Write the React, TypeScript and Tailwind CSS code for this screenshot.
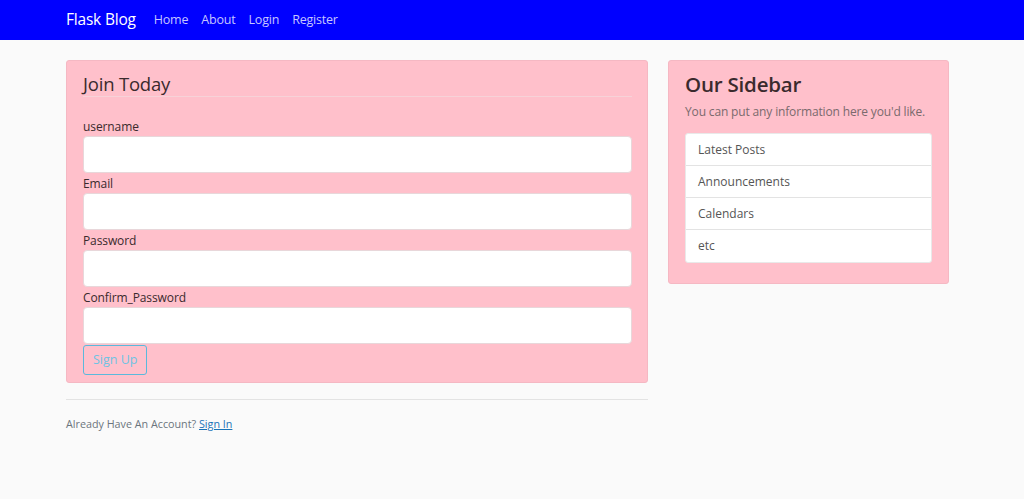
export default function App() {
  const fields = ["username", "Email", "Password", "Confirm_Password"];
  const items = ["Latest Posts", "Announcements", "Calendars", "etc"];
  return (
    <div className="min-h-[499px] bg-[#fafafa] font-['Open_Sans',sans-serif] text-[#212529]">
      <nav className="h-10 bg-[#0000ff] flex items-center pl-[66px]">
        <span className="text-white text-[15.5px] mr-[18px] leading-none tracking-[-0.2px]">Flask Blog</span>
        <div className="flex gap-[13px] text-[12.5px] tracking-[-0.2px] text-[rgba(255,255,255,0.78)]">
          <span>Home</span>
          <span>About</span>
          <span>Login</span>
          <span>Register</span>
        </div>
      </nav>
      <div className="flex gap-5 pl-[66px] pt-5">
        <div className="w-[582px]">
          <div className="bg-[#ffc0cb] border border-[#f5b8c3] rounded-[3px] pl-4 pr-[15px] pt-[11px] pb-[7px]">
            <div className="text-[18.5px] leading-[24px] tracking-[-0.2px] border-b border-[#f7d2d8] text-[#3a2a2d]">Join Today</div>
            <div className="pt-[20px]">
              {fields.map((f) => (
                <div key={f} className="mb-[1px]">
                  <div className="text-[12px] leading-[19px] tracking-[-0.1px] text-[#3a2a2d]">{f}</div>
                  <div className="h-[37px] bg-white rounded-[4px] border border-[#e8d7da]"></div>
                </div>
              ))}
              <button className="h-[30px] px-[9px] border border-[#5ab9dc] rounded-[3px] text-[12.5px] text-[#6fc3e3] bg-transparent">
                Sign Up
              </button>
            </div>
          </div>
          <div className="border-t border-[#e3e3e3] mt-4 pt-[16px] text-[10.75px] text-[#6c757d]">
            Already Have An Account? <span className="text-[#1a73b8] underline">Sign In</span>
          </div>
        </div>
        <div className="w-[281px] self-start bg-[#ffc0cb] border border-[#f5b8c3] rounded-[3px] px-4 pt-[9px] pb-5">
          <div className="text-[20.5px] font-semibold leading-[28px] tracking-[-0.2px] text-[#3a2a2d]">Our Sidebar</div>
          <div className="text-[12px] tracking-[-0.15px] whitespace-nowrap text-[#7a6a6d] mt-[5px] mb-[12px]">You can put any information here you'd like.</div>
          <div className="bg-white rounded-[3px] border border-[#e9e9e9]">
            {items.map((it, i) => (
              <div
                key={it}
                className={`h-[32px] flex items-center px-[12px] text-[12px] text-[#555] ${i < 3 ? "border-b border-[#e3e3e3]" : ""}`}
              >
                {it}
              </div>
            ))}
          </div>
        </div>
      </div>
    </div>
  );
}
